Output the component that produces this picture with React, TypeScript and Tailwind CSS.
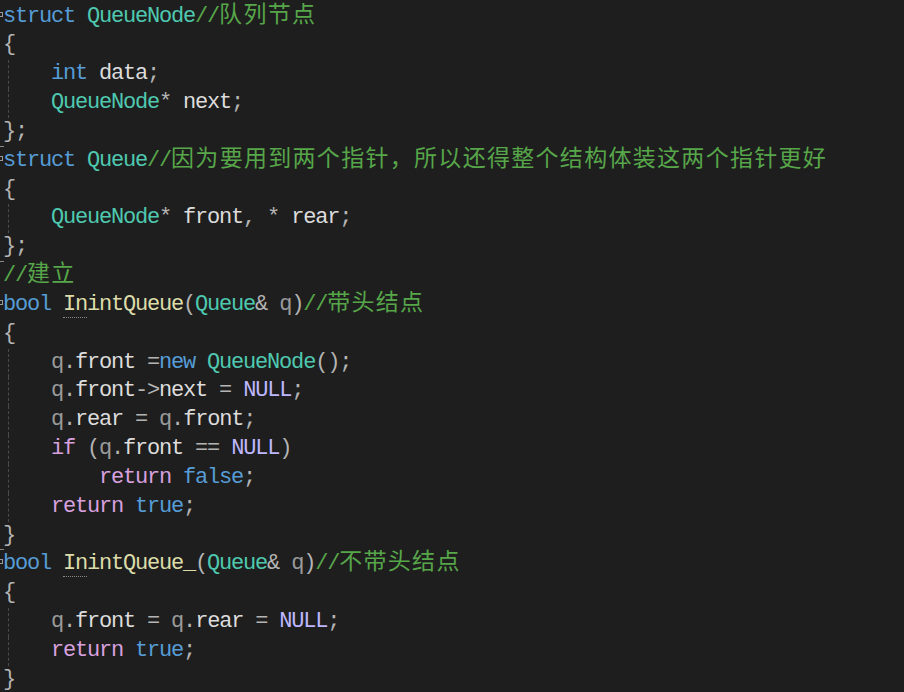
import React from "react";

type Tok = [string, string];

const KW = "text-[#569cd6]";
const TY = "text-[#4ec9b0]";
const CM = "text-[#57a64a]";
const ID = "text-[#dcdcdc]";
const PU = "text-[#b4b4b4]";
const CT = "text-[#d8a0df]";
const PA = "text-[#9a9a9a]";
const MA = "text-[#beb7ff]";
const FN = "text-[#dcdcaa]";

const lines: Tok[][] = [
  [["struct", KW], [" ", ID], ["QueueNode", TY], ["//队列节点", CM]],
  [["{", PU]],
  [["    ", ID], ["int", KW], [" data", ID], [";", PU]],
  [["    ", ID], ["QueueNode", TY], ["*", PU], [" next", ID], [";", PU]],
  [["}", PU], [";", PU]],
  [["struct", KW], [" ", ID], ["Queue", TY], ["//因为要用到两个指针，所以还得整个结构体装这两个指针更好", CM]],
  [["{", PU]],
  [["    ", ID], ["QueueNode", TY], ["*", PU], [" front", ID], [",", PU], [" ", ID], ["*", PU], [" rear", ID], [";", PU]],
  [["}", PU], [";", PU]],
  [["//建立", CM]],
  [["bool", KW], [" ", ID], ["@In", FN], ["intQueue", FN], ["(", PU], ["Queue", TY], ["&", PU], [" ", ID], ["q", PA], [")", PU], ["//带头结点", CM]],
  [["{", PU]],
  [["    ", ID], ["q", PA], [".", PU], ["front ", ID], ["=", PU], ["new", KW], [" ", ID], ["QueueNode", TY], ["()", PU], [";", PU]],
  [["    ", ID], ["q", PA], [".", PU], ["front", ID], ["->", PU], ["next ", ID], ["=", PU], [" ", ID], ["NULL", MA], [";", PU]],
  [["    ", ID], ["q", PA], [".", PU], ["rear ", ID], ["=", PU], [" ", ID], ["q", PA], [".", PU], ["front", ID], [";", PU]],
  [["    ", ID], ["if", CT], [" ", ID], ["(", PU], ["q", PA], [".", PU], ["front ", ID], ["==", PU], [" ", ID], ["NULL", MA], [")", PU]],
  [["        ", ID], ["return", CT], [" ", ID], ["false", KW], [";", PU]],
  [["    ", ID], ["return", CT], [" ", ID], ["true", KW], [";", PU]],
  [["}", PU]],
  [["bool", KW], [" ", ID], ["@In", FN], ["intQueue_", FN], ["(", PU], ["Queue", TY], ["&", PU], [" ", ID], ["q", PA], [")", PU], ["//不带头结点", CM]],
  [["{", PU]],
  [["    ", ID], ["q", PA], [".", PU], ["front ", ID], ["=", PU], [" ", ID], ["q", PA], [".", PU], ["rear ", ID], ["=", PU], [" ", ID], ["NULL", MA], [";", PU]],
  [["    ", ID], ["return", CT], [" ", ID], ["true", KW], [";", PU]],
  [["}", PU]],
];

const foldStarts = new Set([0, 5, 10, 19]);
const foldEnds = new Set([4, 8, 18, 23]);
const guideLines = new Set([2, 3, 7, 12, 13, 14, 15, 16, 17, 21, 22]);

const isCJK = (c: string) => /[\u3000-\u9fff\uff00-\uffef]/.test(c);

function splitRuns(text: string): { t: string; cjk: boolean }[] {
  const runs: { t: string; cjk: boolean }[] = [];
  for (const ch of text) {
    const c = isCJK(ch);
    const last = runs[runs.length - 1];
    if (last && last.cjk === c) last.t += ch;
    else runs.push({ t: ch, cjk: c });
  }
  return runs;
}

function Token({ text, color }: { text: string; color: string }) {
  if (text.startsWith("@")) {
    return (
      <span className={color + " border-b border-dotted border-[#8a8a8a]"}>
        {text.slice(1)}
      </span>
    );
  }
  return (
    <>
      {splitRuns(text).map((r, i) =>
        r.cjk ? (
          <span
            key={i}
            className={
              color +
              " text-[23px] leading-[0] tracking-[1.3px] [font-family:'Noto_Sans_CJK_SC',sans-serif]"
            }
          >
            {r.t}
          </span>
        ) : (
          <span key={i} className={color}>
            {r.t}
          </span>
        )
      )}
    </>
  );
}

export default function App() {
  return (
    <div className="w-[904px] h-[692px] bg-[#1e1e1e] overflow-hidden">
      <div className="flex flex-col pt-[2.6px] [font-family:'Liberation_Mono',monospace] text-[22px] tracking-[-1.2px] leading-[28.83px] whitespace-pre">
        {lines.map((ln, i) => (
          <div key={i} className="relative h-[28.83px] pl-[3px]">
            {guideLines.has(i) && (
              <div className="absolute left-[8px] top-0 bottom-0 border-l border-dashed border-[#4a4a4a]" />
            )}
            {foldStarts.has(i) && (
              <div className="absolute left-[-2px] top-[9px] w-[5px] h-[5px] border border-[#9a9a9a]" />
            )}
            {foldEnds.has(i) && (
              <div className="absolute left-0 bottom-[0px] w-[4px] h-px bg-[#8a8a8a]" />
            )}
            {ln.map(([t, c], j) => (
              <Token key={j} text={t} color={c} />
            ))}
          </div>
        ))}
      </div>
    </div>
  );
}
